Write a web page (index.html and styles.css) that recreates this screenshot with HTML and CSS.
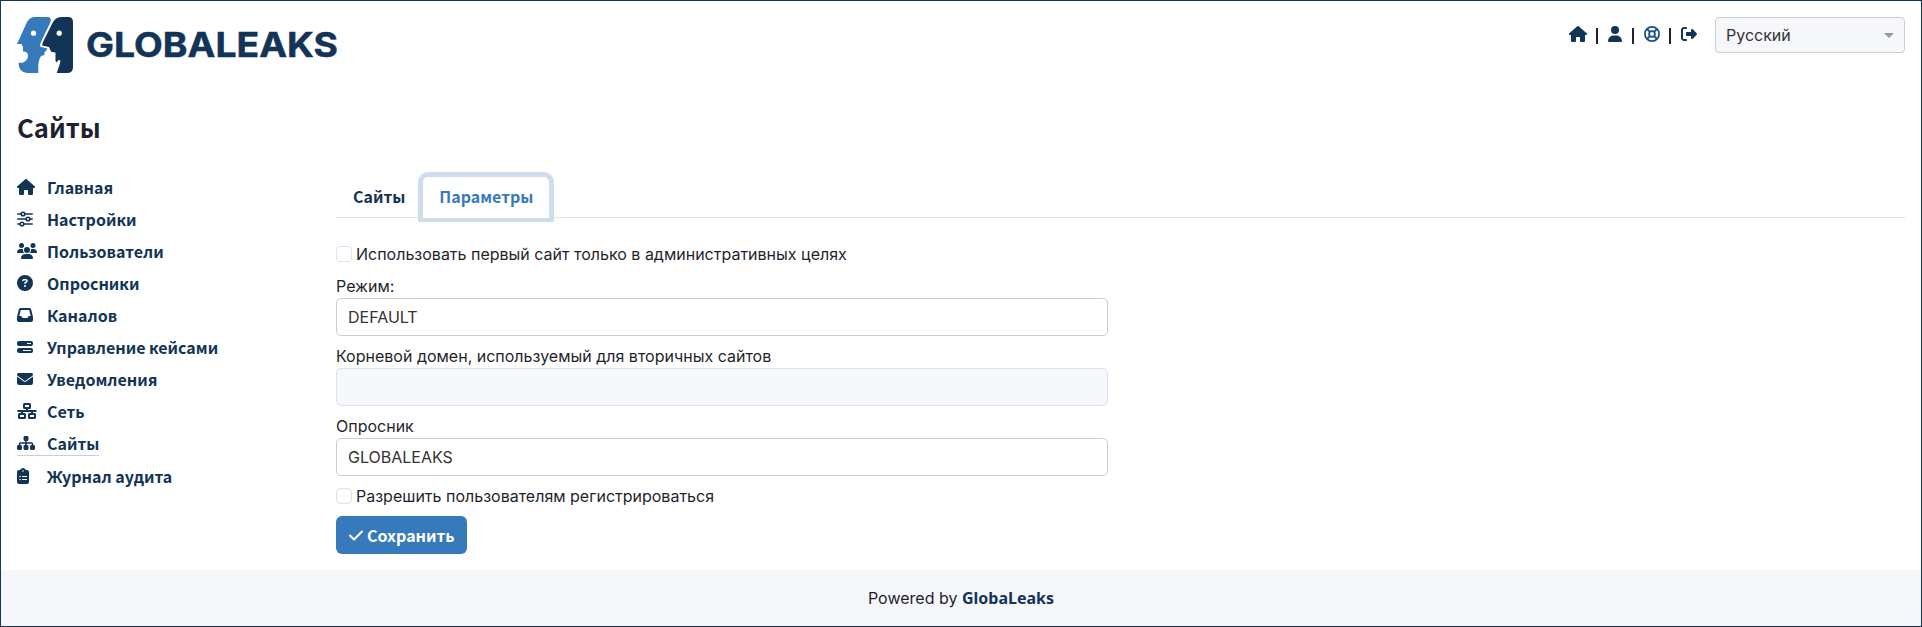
FILE: index.html
```html
<!DOCTYPE html>
<html lang="ru">
<head>
<meta charset="utf-8">
<title>GLOBALEAKS</title>
<link rel="stylesheet" href="styles.css">
</head>
<body>
<div class="page">
  <header class="header">
    <a class="logo">
      <svg width="322" height="58" viewBox="0 0 322 58" role="img" aria-label="GLOBALEAKS">
        <path fill="#377abc" d="M18 1H30Q35 1 33.500 6L24 26Q22 30 24 31L30.500 32.500 29 35 27.500 36V39L24 40 22.500 43 21.300 48V57H10Q1.500 56 1.500 46.500C7 48 11 44 11 39.500 11 37 9 35.500 6 35.500V31L4.500 28H0Q0 27 1 26L5 17 10 6Q13 1 18 1Z"/>
        <path fill="#123456" d="M44 1H51Q56 1 56 6V51Q56 57 50 57H39.700L42.500 49 43.500 44.500 41.500 44 39.500 46.500 38.500 45V36.500L34.500 36 33 33.500 32 31 25 29.500 26 26 35.500 7Q38.500 1 44 1Z"/>
        <circle cx="16.500" cy="17.200" r="2.600" fill="#fff"/><circle cx="42.200" cy="17.200" r="2.600" fill="#fff"/>
        <text class="logo-text" x="69" y="41" textLength="252" lengthAdjust="spacingAndGlyphs">GLOBALEAKS</text>
      </svg>
    </a>
    <div class="tools">
      <div class="links">
        <svg class="ic" width="18" height="16" viewBox="0 0 576 512"><use href="#house"/></svg><span class="bar"></span>
        <svg class="ic" width="14" height="16" viewBox="0 0 448 512"><path d="M224 256A128 128 0 1 0 224 0a128 128 0 1 0 0 256zm-45.700 48C79.800 304 0 383.800 0 482.300C0 498.700 13.300 512 29.700 512H418.300c16.400 0 29.700-13.300 29.700-29.700C448 383.800 368.200 304 269.700 304H178.300z"/></svg><span class="bar wide"></span>
        <svg class="ring" width="16" height="16" viewBox="0 0 16 16"><circle cx="8" cy="8" r="7.100"/><circle cx="8" cy="8" r="2.900"/><path d="M3 3L5.900 5.900M13 3L10.100 5.900M3 13L5.900 10.100M13 13L10.100 10.100"/></svg><span class="bar"></span>
        <svg class="ic" width="16" height="16" viewBox="0 0 512 512"><path d="M377.900 105.900L500.700 228.700c7.200 7.200 11.300 17.100 11.300 27.300s-4.100 20.100-11.300 27.300L377.900 406.100c-6.400 6.400-15 9.900-24 9.900c-18.700 0-33.900-15.200-33.900-33.900l0-62.100-128 0c-17.700 0-32-14.300-32-32l0-64c0-17.700 14.300-32 32-32l128 0 0-62.100c0-18.700 15.200-33.900 33.900-33.900c9 0 17.600 3.600 24 9.900zM160 96L96 96c-17.700 0-32 14.300-32 32l0 256c0 17.700 14.300 32 32 32l64 0c17.700 0 32 14.300 32 32s-14.300 32-32 32l-64 0c-53 0-96-43-96-96L0 128C0 75 43 32 96 32l64 0c17.700 0 32 14.300 32 32s-14.300 32-32 32z"/></svg>
      </div>
      <div class="lang"><span>Русский</span><i class="caret"></i></div>
    </div>
  </header>
  <h1 class="title">Сайты</h1>
  <main class="main">
    <nav class="side">
      <a class="item"><span class="slot"><svg class="ic" width="18" height="16" viewBox="0 0 576 512"><path id="house" d="M575.800 255.500c0 18-15 32.100-32 32.100h-32l.7 160.200c0 2.700-.2 5.400-.5 8.100V472c0 22.100-17.900 40-40 40H392c-22.100 0-40-17.900-40-40V384c0-17.700-14.300-32-32-32H256c-17.700 0-32 14.300-32 32v88c0 22.100-17.900 40-40 40H104c-22.100 0-40-17.900-40-40V287.600H32c-18 0-32-14-32-32.100c0-9 3-17 10-24L266.400 8c7-7 15-8 22-8s15 2 21 7L564.800 231.500c8 7 12 15 11 24z"/></svg></span><span>Главная</span></a>
      <a class="item"><span class="slot"><svg class="sliders" width="16" height="16" viewBox="0 0 16 16"><path d="M.8 3H4M8 3H15.200M.8 8H9M13 8H15.200M.8 13H3M7 13H15.200"/><circle cx="6" cy="3" r="1.800"/><circle cx="11" cy="8" r="1.800"/><circle cx="5" cy="13" r="1.800"/></svg></span><span>Настройки</span></a>
      <a class="item"><span class="slot"><svg class="ic" width="20" height="16" viewBox="0 0 640 512"><path d="M144 0a80 80 0 1 1 0 160A80 80 0 1 1 144 0zM512 0a80 80 0 1 1 0 160A80 80 0 1 1 512 0zM0 298.700C0 239.800 47.800 192 106.700 192h42.700c15.900 0 31 3.500 44.600 9.700c-1.300 7.200-1.900 14.700-1.900 22.300c0 38.200 16.800 72.500 43.300 96H21.300C9.600 320 0 310.400 0 298.700zM405.300 320h-.7c26.600-23.500 43.300-57.800 43.300-96c0-7.600-.7-15-1.900-22.300c13.600-6.300 28.700-9.700 44.600-9.700h42.700C592.200 192 640 239.800 640 298.700c0 11.800-9.600 21.300-21.300 21.300H405.300zM224 224a96 96 0 1 1 192 0 96 96 0 1 1-192 0zM128 485.300C128 411.700 187.700 352 261.300 352H378.700C452.300 352 512 411.700 512 485.300c0 14.700-11.900 26.700-26.700 26.700H154.700c-14.700 0-26.700-11.900-26.700-26.700z"/></svg></span><span>Пользователи</span></a>
      <a class="item"><span class="slot"><svg class="ic" width="16" height="16" viewBox="0 0 512 512"><path d="M256 512A256 256 0 1 0 256 0a256 256 0 1 0 0 512zM169.800 165.300c7.900-22.300 29.100-37.300 52.800-37.300h58.300c34.900 0 63.100 28.300 63.100 63.100c0 22.600-12.100 43.500-31.700 54.800L280 264.400c-.2 13-10.900 23.600-24 23.600c-13.300 0-24-10.700-24-24V250.500c0-8.600 4.600-16.500 12.100-20.800l44.300-25.400c4.700-2.700 7.600-7.700 7.600-13.100c0-8.400-6.800-15.100-15.100-15.100H222.600c-3.400 0-6.400 2.100-7.500 5.300l-.4 1.200c-4.400 12.500-18.200 19-30.600 14.600s-19-18.200-14.600-30.600l.4-1.200zM224 352a32 32 0 1 1 64 0 32 32 0 1 1-64 0z"/></svg></span><span>Опросники</span></a>
      <a class="item"><span class="slot"><svg class="ic" width="16" height="16" viewBox="0 0 512 512"><path d="M121 32C91.600 32 66 52 58.900 80.500L1.900 308.400C.6 313.500 0 318.700 0 323.900V416c0 35.300 28.700 64 64 64H448c35.300 0 64-28.700 64-64V323.900c0-5.200-.6-10.400-1.900-15.500l-57-227.900C446 52 420.400 32 391 32H121zm0 64H391l48 192H387.800c-12.100 0-23.200 6.800-28.600 17.700l-14.300 28.600c-5.400 10.800-16.500 17.700-28.600 17.700H195.800c-12.100 0-23.200-6.800-28.600-17.700l-14.300-28.600c-5.400-10.800-16.500-17.700-28.600-17.700H73L121 96z"/></svg></span><span>Каналов</span></a>
      <a class="item"><span class="slot"><svg class="ic" width="16" height="16" viewBox="0 0 16 16"><path fill-rule="evenodd" d="M2 2H14Q16 2 16 4V5Q16 7 14 7H2Q0 7 0 5V4Q0 2 2 2ZM10 4V5H14V4ZM2 9H14Q16 9 16 11V12Q16 14 14 14H2Q0 14 0 12V11Q0 9 2 9ZM6 11V12H14V11Z"/></svg></span><span>Управление кейсами</span></a>
      <a class="item"><span class="slot"><svg class="ic" width="16" height="16" viewBox="0 0 512 512"><path d="M48 64C21.500 64 0 85.500 0 112c0 15.100 7.100 29.300 19.200 38.400L236.800 313.600c11.400 8.500 27 8.500 38.400 0L492.800 150.400c12.100-9.100 19.200-23.300 19.200-38.400c0-26.500-21.500-48-48-48H48zM0 176V384c0 35.300 28.700 64 64 64H448c35.300 0 64-28.700 64-64V176L294.400 339.200c-22.800 17.100-54 17.100-76.800 0L0 176z"/></svg></span><span>Уведомления</span></a>
      <a class="item"><span class="slot"><svg class="net" width="20" height="16" viewBox="0 0 20 16"><rect x="7" y="1" width="6" height="4" rx=".5"/><rect x="2" y="11" width="6" height="4" rx=".5"/><rect x="12" y="11" width="6" height="4" rx=".5"/><path d="M.500 8H19.500M10 5V8M5 8V11M15 8V11"/></svg></span><span>Сеть</span></a>
      <a class="item active"><span class="slot"><svg class="ic" width="18" height="16" viewBox="0 0 576 512"><path d="M208 80c0-26.500 21.500-48 48-48h64c26.500 0 48 21.500 48 48v64c0 26.500-21.500 48-48 48h-8v40H464c30.900 0 56 25.100 56 56v32h8c26.500 0 48 21.500 48 48v64c0 26.500-21.500 48-48 48H464c-26.500 0-48-21.500-48-48V368c0-26.500 21.500-48 48-48h8V288c0-4.400-3.600-8-8-8H312v40h8c26.500 0 48 21.500 48 48v64c0 26.500-21.500 48-48 48H256c-26.500 0-48-21.500-48-48V368c0-26.500 21.500-48 48-48h8V280H112c-4.400 0-8 3.600-8 8v32h8c26.500 0 48 21.500 48 48v64c0 26.500-21.500 48-48 48H48c-26.500 0-48-21.500-48-48V368c0-26.500 21.500-48 48-48h8V288c0-30.900 25.100-56 56-56H264V192h-8c-26.500 0-48-21.500-48-48V80z"/></svg></span><span>Сайты</span></a>
      <a class="item"><span class="slot"><svg class="ic" width="12" height="16" viewBox="0 0 12 16"><path fill-rule="evenodd" d="M2 2H3.200A3 3 0 0 1 8.800 2H10Q12 2 12 4V14Q12 16 10 16H2Q0 16 0 14V4Q0 2 2 2ZM6 2.200A.8.8 0 0 0 6 3.800.8.8 0 0 0 6 2.200ZM3 7.700A.7.7 0 0 0 3 9.200.7.7 0 0 0 3 7.700ZM5 8V9H10V8ZM3 10.800A.7.7 0 0 0 3 12.200.7.7 0 0 0 3 10.800ZM5 11V12H10V11Z"/></svg></span><span>Журнал аудита</span></a>
    </nav>
    <section class="content">
      <div class="tabs"><a class="tab">Сайты</a><a class="tab current">Параметры</a></div>
      <form class="form">
        <label class="check"><i class="box"></i>Использовать первый сайт только в административных целях</label>
        <div class="field"><label>Режим:</label><div class="input">DEFAULT</div></div>
        <div class="field"><label>Корневой домен, используемый для вторичных сайтов</label><div class="input off"></div></div>
        <div class="field"><label>Опросник</label><div class="input">GLOBALEAKS</div></div>
        <label class="check last"><i class="box"></i>Разрешить пользователям регистрироваться</label>
        <button type="button" class="save"><svg width="14" height="16" viewBox="0 0 14 16"><path d="M1 8.500L5 12.500L13 4.500"/></svg>Сохранить</button>
      </form>
    </section>
  </main>
  <footer class="footer">Powered by <b>GlobaLeaks</b></footer>
</div>
</body>
</html>
```
FILE: styles.css
```css
* { box-sizing: border-box; }
body { margin: 0; background: #fff; color: #1f1f2e; font: 16px/24px Inter, sans-serif; }
.page { display: flex; flex-direction: column; height: 627px; border: 1px solid #123456; }
.header { display: flex; justify-content: space-between; padding: 15px 16px 0; height: 92px; }
.logo, .logo svg { display: block; }
.logo-text { font: 700 34px Inter, sans-serif; fill: #123456; stroke: #123456; stroke-width: .5; }
.tools { display: flex; align-items: flex-start; gap: 18px; padding-top: 1px; }
.links { display: flex; align-items: center; height: 34px; }
.ic { fill: #123456; }
.bar { width: 2px; height: 16px; margin: 3px 10px 0 9px; background: #1f1f2e; }
.wide { margin-left: 10px; }
.ring { fill: none; stroke: #1d5089; stroke-width: 1.800; }
.lang { display: flex; align-items: center; justify-content: space-between; width: 190px; height: 36px; padding: 0 10px; border: 1px solid #ccc; border-radius: 4px; background: #f5f7fb; color: #333; }
.caret { border: 5px solid transparent; border-top-color: #999; border-bottom: 0; }
.title { margin: 0; padding: 17px 16px 0; height: 83px; font: 700 25.6px/34px "Noto Sans CJK SC", "Noto Sans", sans-serif; }
.main { display: flex; flex: 1; padding: 0 16px; }
.side { display: flex; flex-direction: column; align-items: flex-start; width: 319px; margin-top: -1px; font: 700 16px/24px "Noto Sans CJK SC", "Noto Sans", sans-serif; color: #123456; }
.item { display: flex; align-items: center; height: 24px; margin-bottom: 8px; }
.active { height: 25px; border-bottom: 1px solid #c5cde0; }
.slot { display: flex; width: 30px; }
.sliders { fill: none; stroke: #123456; stroke-width: 1.600; stroke-linecap: round; }
.net { fill: none; stroke: #123456; stroke-width: 2; }
.content { flex: 1; }
.tabs { display: flex; height: 42px; border-bottom: 1px solid #dce2ef; font: 700 16px/24px "Noto Sans CJK SC", "Noto Sans", sans-serif; color: #123456; }
.tab { padding: 8px 17px 9px; }
.current { height: 42px; padding: 7px 16px 9px; border: 1px solid #cdddee; border-bottom: 0; color: #377abc; background: #fff; border-radius: 6px 6px 0 0; box-shadow: 0 0 0 4px #cdddee; }
.form { display: flex; flex-direction: column; align-items: flex-start; padding-top: 24px; }
.check { display: flex; align-items: center; gap: 4px; height: 24px; margin-bottom: 8px; }
.box { width: 16px; height: 16px; border: 1px solid #dce2ef; border-radius: 4px; }
.field { width: 772px; height: 62px; margin-bottom: 8px; }
.field label { display: block; height: 24px; }
.input { height: 38px; padding: 6px 11px; border: 1px solid #ccc; border-radius: 5px; color: #333; }
.off { background: #f5f7fb; border-color: #dce2ef; }
.save { display: flex; align-items: center; gap: 4px; height: 38px; padding: 0 12px 1px 13px; border: 0; border-radius: 6px; background: #377abc; color: #fff; font: 700 16px/24px "Noto Sans CJK SC", "Noto Sans", sans-serif; }
.save svg { fill: none; stroke: #fff; stroke-width: 2; stroke-linecap: round; stroke-linejoin: round; }
.footer { height: 56px; padding: 16px; background: #f5f7fb; text-align: center; }
.footer b { font: 700 16px/24px "Noto Sans", sans-serif; color: #123456; }
```
